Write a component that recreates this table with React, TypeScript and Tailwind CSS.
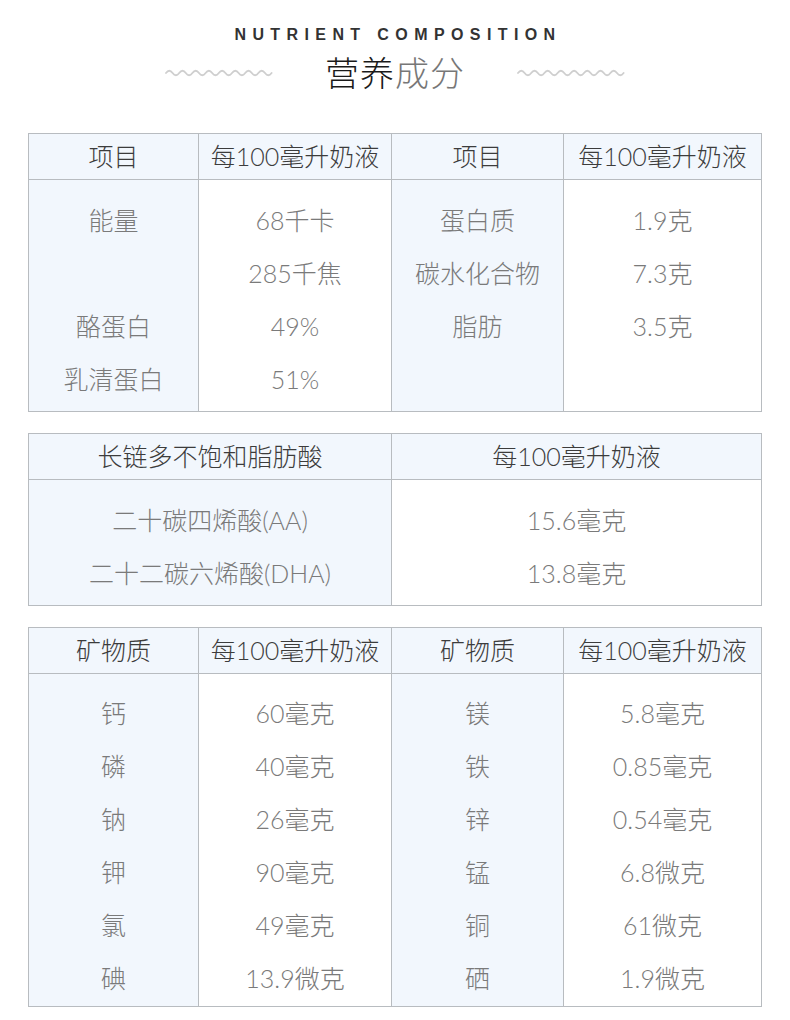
import React from 'react';

const FONT = '"Helvetica Neue", "Lato", "Noto Sans CJK SC", sans-serif';

type Col = { w: string; tint: boolean; head: string; items: string[] };

// 波浪线
function Wave() {
  let d = 'M1 5';
  for (let i = 0; i < 8; i++) d += ' q3.3 -4.5 6.6 0 q3.3 4.5 6.6 0';
  return (
    <svg width="108" height="10" viewBox="0 0 108 10" className="block">
      <path d={d} fill="none" stroke="#cfcfcf" strokeWidth="1.8" strokeLinecap="round" />
    </svg>
  );
}

function Table({ cols, tight }: { cols: Col[]; tight?: boolean }) {
  return (
    <div className="mx-[28px] flex border border-[#b8bcc0]">
      {cols.map((c, i) => (
        <div
          key={i}
          className={`${c.w} flex flex-col ${i > 0 ? 'border-l border-[#b8bcc0]' : ''} ${c.tint ? 'bg-[#f2f7fd]' : 'bg-white'}`}
        >
          <div className="h-[46px] flex items-center justify-center bg-[#f2f7fd] border-b border-[#b8bcc0] text-[25px] text-[#3c3c3c]">
            {c.head}
          </div>
          <div className={tight ? 'pt-[13px] pb-[1px]' : 'pt-[14px] pb-[5px]'}>
            {c.items.map((t, j) => (
              <div key={j} className="h-[53px] flex items-center justify-center text-[25px] text-[#7a7a7a] whitespace-nowrap">
                {t}
              </div>
            ))}
          </div>
        </div>
      ))}
    </div>
  );
}

export default function App() {
  return (
    <div className="w-[790px] h-[1020px] bg-white font-light" style={{ fontFamily: FONT }}>
      <div
        className="pt-[25px] text-center text-[16px] font-bold tracking-[6.4px] text-[#333] leading-[19px] pl-[6px]"
        style={{ fontFamily: '"Liberation Sans", sans-serif' }}
      >
        NUTRIENT COMPOSITION
      </div>
      <div className="mt-[9px] flex items-center justify-center gap-[52px] h-[40px]">
        <Wave />
        <div className="text-[34px] leading-[40px] tracking-[1px]">
          <span className="text-[#1a1a1a]">营养</span>
          <span className="text-[#777]">成分</span>
        </div>
        <Wave />
      </div>

      <div className="mt-[40px] flex flex-col gap-[21px]">
        <Table
          cols={[
            { w: 'w-[169px]', tint: true, head: '项目', items: ['能量', '', '酪蛋白', '乳清蛋白'] },
            { w: 'w-[193px]', tint: false, head: '每100毫升奶液', items: ['68千卡', '285千焦', '49%', '51%'] },
            { w: 'w-[172px]', tint: true, head: '项目', items: ['蛋白质', '碳水化合物', '脂肪', ''] },
            { w: 'flex-1', tint: false, head: '每100毫升奶液', items: ['1.9克', '7.3克', '3.5克', ''] },
          ]}
        />
        <Table
          cols={[
            { w: 'w-[362px]', tint: true, head: '长链多不饱和脂肪酸', items: ['二十碳四烯酸(AA)', '二十二碳六烯酸(DHA)'] },
            { w: 'flex-1', tint: false, head: '每100毫升奶液', items: ['15.6毫克', '13.8毫克'] },
          ]}
        />
        <Table
          tight
          cols={[
            { w: 'w-[169px]', tint: true, head: '矿物质', items: ['钙', '磷', '钠', '钾', '氯', '碘'] },
            { w: 'w-[193px]', tint: false, head: '每100毫升奶液', items: ['60毫克', '40毫克', '26毫克', '90毫克', '49毫克', '13.9微克'] },
            { w: 'w-[172px]', tint: true, head: '矿物质', items: ['镁', '铁', '锌', '锰', '铜', '硒'] },
            { w: 'flex-1', tint: false, head: '每100毫升奶液', items: ['5.8毫克', '0.85毫克', '0.54毫克', '6.8微克', '61微克', '1.9微克'] },
          ]}
        />
      </div>
    </div>
  );
}
